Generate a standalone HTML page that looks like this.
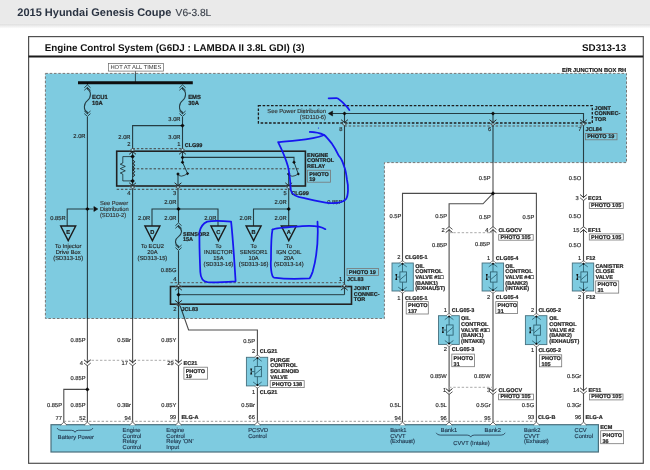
<!DOCTYPE html>
<html><head><meta charset="utf-8"><style>
html,body{margin:0;padding:0;background:#fff;width:650px;height:470px;overflow:hidden;}
svg{position:absolute;left:0;top:0;will-change:transform;}
svg text{font-family:"Liberation Sans",sans-serif;text-rendering:geometricPrecision;}
</style></head><body>
<svg width="650" height="470" viewBox="0 0 650 470">
<defs><linearGradient id="sh" x1="0" y1="0" x2="0" y2="1"><stop offset="0" stop-color="#dcdcdc"/><stop offset="1" stop-color="#ffffff"/></linearGradient></defs>
<rect x="28.6" y="36.6" width="614.6999999999999" height="426.7" fill="#fff" stroke="#505050" stroke-width="1.2" />
<line x1="28.6" y1="56.4" x2="643.2" y2="56.4" stroke="#1a1a1a" stroke-width="2.0" />
<text x="44.7" y="51.0" font-size="9.85" font-weight="bold" text-anchor="start" fill="#111" stroke-width="0">Engine Control System (G6DJ : LAMBDA II 3.8L GDI) (3)</text>
<text x="626.2" y="51.0" font-size="9.8" font-weight="bold" text-anchor="end" fill="#111" stroke-width="0">SD313-13</text>
<text x="626.2" y="71.6" font-size="5.73" font-weight="bold" text-anchor="end" fill="#222" stroke="#222" stroke-width="0.2" >E/R JUNCTION BOX RH</text>
<polygon points="45.4,73.4 626.5,73.4 626.5,162.6 384.4,162.6 384.4,318.5 45.4,318.5" fill="#7ecbe0" stroke="#777" stroke-width="1.0" stroke-dasharray="2.5 1.8"/>
<line x1="135.4" y1="70.6" x2="135.4" y2="82.7" stroke="rgba(0,0,0,0.7)" stroke-width="0.9" />
<rect x="108.4" y="63.4" width="55.099999999999994" height="7.699999999999996" fill="#fff" stroke="#666" stroke-width="0.7" />
<text x="135.9" y="69.3" font-size="5.8" text-anchor="middle" fill="#333" stroke-width="0.05">HOT AT ALL TIMES</text>
<line x1="78" y1="82.7" x2="192.8" y2="82.7" stroke="#0e0e0e" stroke-width="3.0" />
<line x1="87.4" y1="82.7" x2="87.4" y2="84.5" stroke="rgba(0,0,0,0.7)" stroke-width="1.1" />
<polyline points="84.30000000000001,87.7 87.4,84.89999999999999 90.5,87.7" fill="none" stroke="rgba(0,0,0,0.7)" stroke-width="0.95" />
<polyline points="84.30000000000001,90.3 87.4,87.5 90.5,90.3" fill="none" stroke="rgba(0,0,0,0.7)" stroke-width="0.95" />
<path d="M87.4,87.5 L87.4,89.0 C91.9,91.5 90.9,98.15 87.4,100.65 C83.9,103.15 82.9,109.8 87.4,112.3 L87.4,113.8" fill="none" stroke="rgba(0,0,0,0.7)" stroke-width="1.1"/>
<polyline points="84.30000000000001,111.0 87.4,113.8 90.5,111.0" fill="none" stroke="rgba(0,0,0,0.7)" stroke-width="0.95" />
<polyline points="84.30000000000001,113.6 87.4,116.4 90.5,113.6" fill="none" stroke="rgba(0,0,0,0.7)" stroke-width="0.95" />
<polyline points="179.4,87.7 182.5,84.89999999999999 185.6,87.7" fill="none" stroke="rgba(0,0,0,0.7)" stroke-width="0.95" />
<polyline points="179.4,90.3 182.5,87.5 185.6,90.3" fill="none" stroke="rgba(0,0,0,0.7)" stroke-width="0.95" />
<path d="M182.5,87.5 L182.5,89.0 C187.0,91.5 186.0,98.15 182.5,100.65 C179.0,103.15 178.0,109.8 182.5,112.3 L182.5,113.8" fill="none" stroke="rgba(0,0,0,0.7)" stroke-width="1.1"/>
<polyline points="179.4,111.0 182.5,113.8 185.6,111.0" fill="none" stroke="rgba(0,0,0,0.7)" stroke-width="0.95" />
<polyline points="179.4,113.6 182.5,116.4 185.6,113.6" fill="none" stroke="rgba(0,0,0,0.7)" stroke-width="0.95" />
<text x="92" y="99.0" font-size="5.9" font-weight="bold" text-anchor="start" fill="#1e1e1e" stroke="#1e1e1e" stroke-width="0.2" >ECU1</text>
<text x="92" y="104.9" font-size="5.9" font-weight="bold" text-anchor="start" fill="#1e1e1e" stroke="#1e1e1e" stroke-width="0.2" >10A</text>
<text x="188.2" y="99.0" font-size="5.9" font-weight="bold" text-anchor="start" fill="#1e1e1e" stroke="#1e1e1e" stroke-width="0.2" >EMS</text>
<text x="188.2" y="104.9" font-size="5.9" font-weight="bold" text-anchor="start" fill="#1e1e1e" stroke="#1e1e1e" stroke-width="0.2" >30A</text>
<line x1="87.4" y1="117" x2="87.4" y2="424.7" stroke="rgba(0,0,0,0.7)" stroke-width="1.1" />
<text x="85.5" y="138.3" font-size="5.75" text-anchor="end" fill="#262626" stroke="#262626" stroke-width="0.15" >2.0R</text>
<line x1="182.5" y1="117" x2="182.5" y2="151.2" stroke="rgba(0,0,0,0.7)" stroke-width="1.1" />
<text x="180.5" y="121" font-size="5.75" text-anchor="end" fill="#262626" stroke="#262626" stroke-width="0.15" >3.0R</text>
<polygon points="182.5,123.5 184.6,125.6 182.5,127.69999999999999 180.4,125.6" fill="#111"/>
<polyline points="182.5,125.6 132.6,125.6 132.6,151.2" fill="none" stroke="rgba(0,0,0,0.7)" stroke-width="1.1" />
<text x="130.5" y="138.5" font-size="5.75" text-anchor="end" fill="#262626" stroke="#262626" stroke-width="0.15" >2.0R</text>
<text x="180.5" y="138.5" font-size="5.75" text-anchor="end" fill="#262626" stroke="#262626" stroke-width="0.15" >3.0R</text>
<text x="130.5" y="146.2" font-size="5.75" text-anchor="end" fill="#262626" stroke="#262626" stroke-width="0.15" >2</text>
<text x="180.5" y="146.2" font-size="5.75" text-anchor="end" fill="#262626" stroke="#262626" stroke-width="0.15" >1</text>
<text x="184.7" y="146.7" font-size="5.5" font-weight="bold" text-anchor="start" fill="#1e1e1e" stroke="#1e1e1e" stroke-width="0.2" >CLG99</text>
<line x1="132.6" y1="148.7" x2="182.5" y2="148.7" stroke="#444" stroke-width="1.0" stroke-dasharray="2.4 1.8"/>
<rect x="116.7" y="151.2" width="188.7" height="34.80000000000001" fill="none" stroke="#222" stroke-width="1.6" />
<line x1="132.6" y1="149.0" x2="132.6" y2="150.8" stroke="#a9dcea" stroke-width="1.5" />
<polyline points="129.2,151.10000000000002 132.6,148.3 136.0,151.10000000000002" fill="none" stroke="#5a5a5a" stroke-width="1.0" />
<polyline points="129.2,154.3 132.6,151.5 136.0,154.3" fill="none" stroke="#2a2a2a" stroke-width="1.0" />
<line x1="182.5" y1="149.0" x2="182.5" y2="150.8" stroke="#a9dcea" stroke-width="1.5" />
<polyline points="179.1,151.10000000000002 182.5,148.3 185.9,151.10000000000002" fill="none" stroke="#5a5a5a" stroke-width="1.0" />
<polyline points="179.1,154.3 182.5,151.5 185.9,154.3" fill="none" stroke="#2a2a2a" stroke-width="1.0" />
<polyline points="182.5,157.4 294,157.4 294,162.2" fill="none" stroke="rgba(0,0,0,0.7)" stroke-width="1.1" />
<line x1="132.6" y1="168.8" x2="300" y2="168.8" stroke="#444" stroke-width="1.0" stroke-dasharray="2.4 1.8"/>
<line x1="182.5" y1="151.2" x2="182.5" y2="162" stroke="rgba(0,0,0,0.7)" stroke-width="1.1" />
<polygon points="182.5,155.58 184.32,157.4 182.5,159.22 180.68,157.4" fill="#111"/>
<polygon points="182.5,160.38 184.32,162.2 182.5,164.01999999999998 180.68,162.2" fill="#111"/>
<line x1="182.5" y1="162.2" x2="187.6" y2="173.6" stroke="rgba(0,0,0,0.7)" stroke-width="1.0" />
<polygon points="187.6,172.06 189.14,173.6 187.6,175.14 186.06,173.6" fill="#111"/>
<polygon points="178,172.18 179.82,174 178,175.82 176.18,174" fill="#111"/>
<path d="M178,174 Q180,178.5 187.6,173.6" fill="none" stroke="#222" stroke-width="0.8"/>
<line x1="178" y1="174" x2="178" y2="209" stroke="rgba(0,0,0,0.7)" stroke-width="1.1" />
<polygon points="294,160.38 295.82,162.2 294,164.01999999999998 292.18,162.2" fill="#111"/>
<line x1="294" y1="162.2" x2="298.3" y2="174" stroke="rgba(0,0,0,0.7)" stroke-width="1.0" />
<polygon points="298.3,172.46 299.84000000000003,174 298.3,175.54 296.76,174" fill="#111"/>
<polygon points="288.7,172.18 290.52,174 288.7,175.82 286.88,174" fill="#111"/>
<path d="M288.7,174 Q291,178.5 298.3,174" fill="none" stroke="#222" stroke-width="0.8"/>
<line x1="288.7" y1="174" x2="288.7" y2="209" stroke="rgba(0,0,0,0.7)" stroke-width="1.1" />
<line x1="132.6" y1="151.2" x2="132.6" y2="424.7" stroke="rgba(0,0,0,0.7)" stroke-width="1.1" />
<polygon points="132.6,154.35999999999999 134.84,156.6 132.6,158.84 130.35999999999999,156.6" fill="#111"/>
<polygon points="132.6,178.66 134.84,180.9 132.6,183.14000000000001 130.35999999999999,180.9" fill="#111"/>
<path d="M132.6,160.2 q4.2,1.65 0,3.3 q4.2,1.65 0,3.3 q4.2,1.65 0,3.3 q4.2,1.65 0,3.3 q4.2,1.65 0,3.3" fill="none" stroke="#222" stroke-width="1.0"/>
<polyline points="132.6,156.6 122.8,156.6 122.8,163 120.3,164.2 125.3,166.4 120.3,168.6 125.3,170.8 120.3,173 122.8,174.2 122.8,180.9 132.6,180.9" fill="none" stroke="rgba(0,0,0,0.7)" stroke-width="0.9" />
<line x1="116.7" y1="189.3" x2="290" y2="189.3" stroke="#444" stroke-width="1.0" stroke-dasharray="2.4 1.8"/>
<line x1="132.6" y1="186.29999999999998" x2="132.6" y2="188.1" stroke="#a9dcea" stroke-width="1.5" />
<polyline points="129.2,182.79999999999998 132.6,185.6 136.0,182.79999999999998" fill="none" stroke="#2a2a2a" stroke-width="1.0" />
<polyline points="129.2,185.99999999999997 132.6,188.79999999999998 136.0,185.99999999999997" fill="none" stroke="#5a5a5a" stroke-width="1.0" />
<line x1="178" y1="186.29999999999998" x2="178" y2="188.1" stroke="#a9dcea" stroke-width="1.5" />
<polyline points="174.6,182.79999999999998 178,185.6 181.4,182.79999999999998" fill="none" stroke="#2a2a2a" stroke-width="1.0" />
<polyline points="174.6,185.99999999999997 178,188.79999999999998 181.4,185.99999999999997" fill="none" stroke="#5a5a5a" stroke-width="1.0" />
<line x1="288.7" y1="186.29999999999998" x2="288.7" y2="188.1" stroke="#a9dcea" stroke-width="1.5" />
<polyline points="285.3,182.79999999999998 288.7,185.6 292.09999999999997,182.79999999999998" fill="none" stroke="#2a2a2a" stroke-width="1.0" />
<polyline points="285.3,185.99999999999997 288.7,188.79999999999998 292.09999999999997,185.99999999999997" fill="none" stroke="#5a5a5a" stroke-width="1.0" />
<text x="130.5" y="194.7" font-size="5.75" text-anchor="end" fill="#262626" stroke="#262626" stroke-width="0.15" >4</text>
<text x="176.3" y="194.7" font-size="5.75" text-anchor="end" fill="#262626" stroke="#262626" stroke-width="0.15" >3</text>
<text x="286.7" y="194.7" font-size="5.75" text-anchor="end" fill="#262626" stroke="#262626" stroke-width="0.15" >5</text>
<text x="291.2" y="194.7" font-size="5.5" font-weight="bold" text-anchor="start" fill="#1e1e1e" stroke="#1e1e1e" stroke-width="0.2" >CLG99</text>
<text x="307" y="156.6" font-size="5.5" font-weight="bold" text-anchor="start" fill="#1e1e1e" stroke="#1e1e1e" stroke-width="0.2" >ENGINE</text>
<text x="307" y="162.2" font-size="5.5" font-weight="bold" text-anchor="start" fill="#1e1e1e" stroke="#1e1e1e" stroke-width="0.2" >CONTROL</text>
<text x="307" y="167.8" font-size="5.5" font-weight="bold" text-anchor="start" fill="#1e1e1e" stroke="#1e1e1e" stroke-width="0.2" >RELAY</text>
<rect x="307.5" y="170.2" width="23.0" height="12.0" fill="rgba(255,255,255,0.0)" stroke="#777" stroke-width="0.8" />
<text x="309.3" y="175.8" font-size="5.5" font-weight="bold" text-anchor="start" fill="#1e1e1e" stroke="#1e1e1e" stroke-width="0.2" >PHOTO</text>
<text x="309.3" y="181.3" font-size="5.5" font-weight="bold" text-anchor="start" fill="#1e1e1e" stroke="#1e1e1e" stroke-width="0.2" >19</text>
<rect x="258.4" y="105.6" width="333.9" height="17.400000000000006" fill="none" stroke="#1e1e1e" stroke-width="1.3" stroke-dasharray="2.6 1.6"/>
<line x1="344.5" y1="126.0" x2="583.5" y2="126.0" stroke="#555" stroke-width="1.0" stroke-dasharray="2.4 1.8"/>
<text x="326" y="112.8" font-size="5.77" text-anchor="end" fill="#333" stroke="#333" stroke-width="0.15" >See Power Distribution</text>
<text x="326" y="118.5" font-size="5.77" text-anchor="end" fill="#333" stroke="#333" stroke-width="0.15" >(SD110-6)</text>
<polygon points="328.3,113.5 332.6,111.0 332.6,116.0" fill="#111" stroke="#111" stroke-width="0.5" />
<polyline points="332.4,113.5 583.5,113.5 583.5,424.7" fill="none" stroke="rgba(0,0,0,0.7)" stroke-width="1.1" />
<polygon points="344.5,111.4 346.6,113.5 344.5,115.6 342.4,113.5" fill="#111"/>
<polygon points="493,111.4 495.1,113.5 493,115.6 490.9,113.5" fill="#111"/>
<line x1="344.5" y1="113.5" x2="344.5" y2="294.7" stroke="rgba(0,0,0,0.7)" stroke-width="1.1" />
<line x1="493" y1="113.5" x2="493" y2="424.7" stroke="rgba(0,0,0,0.7)" stroke-width="1.1" />
<line x1="344.5" y1="123.2" x2="344.5" y2="125.0" stroke="#a9dcea" stroke-width="1.5" />
<polyline points="341.1,119.7 344.5,122.5 347.9,119.7" fill="none" stroke="#2a2a2a" stroke-width="1.0" />
<polyline points="341.1,122.9 344.5,125.7 347.9,122.9" fill="none" stroke="#5a5a5a" stroke-width="1.0" />
<line x1="493" y1="123.2" x2="493" y2="125.0" stroke="#a9dcea" stroke-width="1.5" />
<polyline points="489.6,119.7 493,122.5 496.4,119.7" fill="none" stroke="#2a2a2a" stroke-width="1.0" />
<polyline points="489.6,122.9 493,125.7 496.4,122.9" fill="none" stroke="#5a5a5a" stroke-width="1.0" />
<line x1="583.5" y1="123.2" x2="583.5" y2="125.0" stroke="#a9dcea" stroke-width="1.5" />
<polyline points="580.1,119.7 583.5,122.5 586.9,119.7" fill="none" stroke="#2a2a2a" stroke-width="1.0" />
<polyline points="580.1,122.9 583.5,125.7 586.9,122.9" fill="none" stroke="#5a5a5a" stroke-width="1.0" />
<text x="342.5" y="130.8" font-size="5.75" text-anchor="end" fill="#262626" stroke="#262626" stroke-width="0.15" >8</text>
<text x="491.3" y="130.8" font-size="5.75" text-anchor="end" fill="#262626" stroke="#262626" stroke-width="0.15" >6</text>
<text x="581.5" y="130.8" font-size="5.75" text-anchor="end" fill="#262626" stroke="#262626" stroke-width="0.15" >7</text>
<text x="594.6" y="109.6" font-size="5.5" font-weight="bold" text-anchor="start" fill="#1e1e1e" stroke="#1e1e1e" stroke-width="0.2" >JOINT</text>
<text x="594.6" y="115.2" font-size="5.5" font-weight="bold" text-anchor="start" fill="#1e1e1e" stroke="#1e1e1e" stroke-width="0.2" >CONNEC-</text>
<text x="594.6" y="120.8" font-size="5.5" font-weight="bold" text-anchor="start" fill="#1e1e1e" stroke="#1e1e1e" stroke-width="0.2" >TOR</text>
<text x="585.4" y="130.8" font-size="5.5" font-weight="bold" text-anchor="start" fill="#1e1e1e" stroke="#1e1e1e" stroke-width="0.2" >JCL84</text>
<rect x="585.4" y="133.5" width="31.600000000000023" height="6.300000000000011" fill="rgba(255,255,255,0.0)" stroke="#777" stroke-width="0.8" />
<text x="587.1999999999999" y="138.3" font-size="5.5" font-weight="bold" text-anchor="start" fill="#1e1e1e" stroke="#1e1e1e" stroke-width="0.2" >PHOTO 19</text>
<text x="342.3" y="204.3" font-size="5.75" text-anchor="end" fill="#262626" stroke="#262626" stroke-width="0.15" >0.85P</text>
<polygon points="87.4,206.9 89.5,209 87.4,211.1 85.30000000000001,209" fill="#111"/>
<polyline points="67.2,226 67.2,209 93,209" fill="none" stroke="rgba(0,0,0,0.7)" stroke-width="1.1" />
<polygon points="93.9,206.6 97.8,209 93.9,211.4" fill="#111" stroke="#111" stroke-width="0.6" />
<text x="65.6" y="220.3" font-size="5.75" text-anchor="end" fill="#262626" stroke="#262626" stroke-width="0.15" >0.85R</text>
<polygon points="60.7,226 75.7,226 68.2,240.6" fill="none" stroke="#1c1c1c" stroke-width="1.4" />
<text x="68.2" y="234.3" font-size="5.7" font-weight="bold" text-anchor="middle" fill="#1e1e1e" stroke="#1e1e1e" stroke-width="0.2" >E</text>
<text x="68.2" y="247.8" font-size="5.75" text-anchor="middle" fill="#262626" stroke="#262626" stroke-width="0.15" >To Injector</text>
<text x="68.2" y="253.8" font-size="5.75" text-anchor="middle" fill="#262626" stroke="#262626" stroke-width="0.15" >Drive Box</text>
<text x="68.2" y="259.7" font-size="5.75" text-anchor="middle" fill="#262626" stroke="#262626" stroke-width="0.15" >(SD313-15)</text>
<text x="99.9" y="205" font-size="5.77" text-anchor="start" fill="#333" stroke="#333" stroke-width="0.15" >See Power</text>
<text x="99.9" y="210.8" font-size="5.77" text-anchor="start" fill="#333" stroke="#333" stroke-width="0.15" >Distribution</text>
<text x="99.9" y="216.8" font-size="5.77" text-anchor="start" fill="#333" stroke="#333" stroke-width="0.15" >(SD110-2)</text>
<text x="176.3" y="203.7" font-size="5.75" text-anchor="end" fill="#262626" stroke="#262626" stroke-width="0.15" >2.0R</text>
<polygon points="178.5,206.9 180.6,209 178.5,211.1 176.4,209" fill="#111"/>
<polyline points="152,226 152,209 218,209 218,226" fill="none" stroke="rgba(0,0,0,0.7)" stroke-width="1.1" />
<line x1="178.5" y1="209" x2="178.5" y2="222.5" stroke="rgba(0,0,0,0.7)" stroke-width="1.1" />
<line x1="178.5" y1="251" x2="178.5" y2="286.5" stroke="rgba(0,0,0,0.7)" stroke-width="1.1" />
<text x="150.2" y="219.6" font-size="5.75" text-anchor="end" fill="#262626" stroke="#262626" stroke-width="0.15" >2.0R</text>
<text x="176.5" y="219.6" font-size="5.75" text-anchor="end" fill="#262626" stroke="#262626" stroke-width="0.15" >2.0R</text>
<text x="216.3" y="219.6" font-size="5.75" text-anchor="end" fill="#262626" stroke="#262626" stroke-width="0.15" >2.0R</text>
<polygon points="144.9,226 159.9,226 152.4,240.6" fill="none" stroke="#1c1c1c" stroke-width="1.4" />
<text x="152.4" y="234.3" font-size="5.7" font-weight="bold" text-anchor="middle" fill="#1e1e1e" stroke="#1e1e1e" stroke-width="0.2" >D</text>
<text x="152.4" y="247.8" font-size="5.75" text-anchor="middle" fill="#262626" stroke="#262626" stroke-width="0.15" >To ECU2</text>
<text x="152.4" y="253.8" font-size="5.75" text-anchor="middle" fill="#262626" stroke="#262626" stroke-width="0.15" >20A</text>
<text x="152.4" y="259.7" font-size="5.75" text-anchor="middle" fill="#262626" stroke="#262626" stroke-width="0.15" >(SD313-15)</text>
<polygon points="210.9,226 225.9,226 218.4,240.6" fill="none" stroke="#1c1c1c" stroke-width="1.4" />
<text x="218.4" y="234.3" font-size="5.7" font-weight="bold" text-anchor="middle" fill="#1e1e1e" stroke="#1e1e1e" stroke-width="0.2" >C</text>
<text x="218.4" y="248" font-size="5.75" text-anchor="middle" fill="#262626" stroke="#262626" stroke-width="0.15" >To</text>
<text x="218.4" y="254" font-size="5.75" text-anchor="middle" fill="#262626" stroke="#262626" stroke-width="0.15" >INJECTOR</text>
<text x="218.4" y="259.9" font-size="5.75" text-anchor="middle" fill="#262626" stroke="#262626" stroke-width="0.15" >15A</text>
<text x="218.4" y="265.8" font-size="5.75" text-anchor="middle" fill="#262626" stroke="#262626" stroke-width="0.15" >(SD313-16)</text>
<polyline points="175.4,225.70000000000002 178.5,222.9 181.6,225.70000000000002" fill="none" stroke="rgba(0,0,0,0.7)" stroke-width="0.95" />
<polyline points="175.4,228.3 178.5,225.5 181.6,228.3" fill="none" stroke="rgba(0,0,0,0.7)" stroke-width="0.95" />
<path d="M178.5,225.5 L178.5,227.0 C183.0,229.5 182.0,234.15 178.5,236.65 C175.0,239.15 174.0,243.8 178.5,246.3 L178.5,247.8" fill="none" stroke="rgba(0,0,0,0.7)" stroke-width="1.1"/>
<polyline points="175.4,245.0 178.5,247.8 181.6,245.0" fill="none" stroke="rgba(0,0,0,0.7)" stroke-width="0.95" />
<polyline points="175.4,247.6 178.5,250.4 181.6,247.6" fill="none" stroke="rgba(0,0,0,0.7)" stroke-width="0.95" />
<text x="183" y="235.6" font-size="5.5" font-weight="bold" text-anchor="start" fill="#1e1e1e" stroke="#1e1e1e" stroke-width="0.2" >SENSOR2</text>
<text x="183" y="240.9" font-size="5.5" font-weight="bold" text-anchor="start" fill="#1e1e1e" stroke="#1e1e1e" stroke-width="0.2" >15A</text>
<text x="176.5" y="272.2" font-size="5.75" text-anchor="end" fill="#262626" stroke="#262626" stroke-width="0.15" >0.85G</text>
<text x="176.5" y="280.8" font-size="5.75" text-anchor="end" fill="#262626" stroke="#262626" stroke-width="0.15" >4</text>
<text x="286.7" y="203.7" font-size="5.75" text-anchor="end" fill="#262626" stroke="#262626" stroke-width="0.15" >2.0R</text>
<polygon points="288.7,206.9 290.8,209 288.7,211.1 286.59999999999997,209" fill="#111"/>
<polyline points="253.5,226 253.5,209 288.7,209 288.7,226" fill="none" stroke="rgba(0,0,0,0.7)" stroke-width="1.1" />
<text x="251.7" y="219.6" font-size="5.75" text-anchor="end" fill="#262626" stroke="#262626" stroke-width="0.15" >2.0R</text>
<text x="286.7" y="219.6" font-size="5.75" text-anchor="end" fill="#262626" stroke="#262626" stroke-width="0.15" >2.0R</text>
<polygon points="246.1,226 261.1,226 253.6,240.6" fill="none" stroke="#1c1c1c" stroke-width="1.4" />
<text x="253.6" y="234.3" font-size="5.7" font-weight="bold" text-anchor="middle" fill="#1e1e1e" stroke="#1e1e1e" stroke-width="0.2" >B</text>
<text x="253.6" y="248" font-size="5.75" text-anchor="middle" fill="#262626" stroke="#262626" stroke-width="0.15" >To</text>
<text x="253.6" y="254" font-size="5.75" text-anchor="middle" fill="#262626" stroke="#262626" stroke-width="0.15" >SENSOR1</text>
<text x="253.6" y="259.9" font-size="5.75" text-anchor="middle" fill="#262626" stroke="#262626" stroke-width="0.15" >10A</text>
<text x="253.6" y="265.8" font-size="5.75" text-anchor="middle" fill="#262626" stroke="#262626" stroke-width="0.15" >(SD313-16)</text>
<polygon points="281.3,226 296.3,226 288.8,240.6" fill="none" stroke="#1c1c1c" stroke-width="1.4" />
<text x="288.8" y="234.3" font-size="5.7" font-weight="bold" text-anchor="middle" fill="#1e1e1e" stroke="#1e1e1e" stroke-width="0.2" >A</text>
<text x="288.8" y="248" font-size="5.75" text-anchor="middle" fill="#262626" stroke="#262626" stroke-width="0.15" >To</text>
<text x="288.8" y="254" font-size="5.75" text-anchor="middle" fill="#262626" stroke="#262626" stroke-width="0.15" >IGN COIL</text>
<text x="288.8" y="259.9" font-size="5.75" text-anchor="middle" fill="#262626" stroke="#262626" stroke-width="0.15" >20A</text>
<text x="288.8" y="265.8" font-size="5.75" text-anchor="middle" fill="#262626" stroke="#262626" stroke-width="0.15" >(SD313-14)</text>
<line x1="170.5" y1="282.7" x2="344.3" y2="282.7" stroke="#555" stroke-width="1.0" stroke-dasharray="2.4 1.8"/>
<rect x="170.5" y="286.5" width="181.0" height="17.69999999999999" fill="none" stroke="#222" stroke-width="1.6" />
<polyline points="178.5,294.7 344.3,294.7" fill="none" stroke="rgba(0,0,0,0.7)" stroke-width="1.0" />
<line x1="178.5" y1="284.9" x2="178.5" y2="286.7" stroke="#a9dcea" stroke-width="1.5" />
<polyline points="175.1,287.0 178.5,284.2 181.9,287.0" fill="none" stroke="#5a5a5a" stroke-width="1.0" />
<polyline points="175.1,290.2 178.5,287.4 181.9,290.2" fill="none" stroke="#2a2a2a" stroke-width="1.0" />
<line x1="344.3" y1="284.9" x2="344.3" y2="286.7" stroke="#a9dcea" stroke-width="1.5" />
<polyline points="340.90000000000003,287.0 344.3,284.2 347.7,287.0" fill="none" stroke="#5a5a5a" stroke-width="1.0" />
<polyline points="340.90000000000003,290.2 344.3,287.4 347.7,290.2" fill="none" stroke="#2a2a2a" stroke-width="1.0" />
<line x1="178.5" y1="303.9" x2="178.5" y2="305.7" stroke="#a9dcea" stroke-width="1.5" />
<polyline points="175.1,300.4 178.5,303.2 181.9,300.4" fill="none" stroke="#2a2a2a" stroke-width="1.0" />
<polyline points="175.1,303.59999999999997 178.5,306.4 181.9,303.59999999999997" fill="none" stroke="#5a5a5a" stroke-width="1.0" />
<polygon points="178.5,292.59999999999997 180.6,294.7 178.5,296.8 176.4,294.7" fill="#111"/>
<text x="342.3" y="280.8" font-size="5.75" text-anchor="end" fill="#262626" stroke="#262626" stroke-width="0.15" >1</text>
<text x="347" y="281.0" font-size="5.5" font-weight="bold" text-anchor="start" fill="#1e1e1e" stroke="#1e1e1e" stroke-width="0.2" >JCL83</text>
<rect x="347" y="268.5" width="31.5" height="6.899999999999977" fill="rgba(255,255,255,0.0)" stroke="#777" stroke-width="0.8" />
<text x="348.8" y="273.9" font-size="5.5" font-weight="bold" text-anchor="start" fill="#1e1e1e" stroke="#1e1e1e" stroke-width="0.2" >PHOTO 19</text>
<text x="353.8" y="290.2" font-size="5.5" font-weight="bold" text-anchor="start" fill="#1e1e1e" stroke="#1e1e1e" stroke-width="0.2" >JOINT</text>
<text x="353.8" y="295.8" font-size="5.5" font-weight="bold" text-anchor="start" fill="#1e1e1e" stroke="#1e1e1e" stroke-width="0.2" >CONNEC-</text>
<text x="353.8" y="301.4" font-size="5.5" font-weight="bold" text-anchor="start" fill="#1e1e1e" stroke="#1e1e1e" stroke-width="0.2" >TOR</text>
<text x="176.5" y="311.2" font-size="5.75" text-anchor="end" fill="#262626" stroke="#262626" stroke-width="0.15" >2</text>
<text x="181.5" y="311.2" font-size="5.5" font-weight="bold" text-anchor="start" fill="#1e1e1e" stroke="#1e1e1e" stroke-width="0.2" >JCL83</text>
<line x1="178.5" y1="286.5" x2="178.5" y2="424.7" stroke="rgba(0,0,0,0.7)" stroke-width="1.1" />
<polyline points="180.2,306 188.6,330 257.4,330 257.4,424.7" fill="none" stroke="rgba(0,0,0,0.7)" stroke-width="1.1" />
<text x="85.6" y="342" font-size="5.75" text-anchor="end" fill="#262626" stroke="#262626" stroke-width="0.15" >0.85P</text>
<text x="131" y="342" font-size="5.75" text-anchor="end" fill="#262626" stroke="#262626" stroke-width="0.15" >0.5Br</text>
<text x="176.3" y="342.4" font-size="5.75" text-anchor="end" fill="#262626" stroke="#262626" stroke-width="0.15" >0.85Y</text>
<line x1="87.4" y1="360.3" x2="178.5" y2="360.3" stroke="#aaa" stroke-width="1.0" stroke-dasharray="2.4 1.8"/>
<line x1="87.4" y1="363.3" x2="87.4" y2="365.1" stroke="#ffffff" stroke-width="1.5" />
<polyline points="84.0,359.8 87.4,362.6 90.80000000000001,359.8" fill="none" stroke="#2a2a2a" stroke-width="1.0" />
<polyline points="84.0,363.0 87.4,365.8 90.80000000000001,363.0" fill="none" stroke="#5a5a5a" stroke-width="1.0" />
<line x1="132.6" y1="363.3" x2="132.6" y2="365.1" stroke="#ffffff" stroke-width="1.5" />
<polyline points="129.2,359.8 132.6,362.6 136.0,359.8" fill="none" stroke="#2a2a2a" stroke-width="1.0" />
<polyline points="129.2,363.0 132.6,365.8 136.0,363.0" fill="none" stroke="#5a5a5a" stroke-width="1.0" />
<line x1="178.5" y1="363.3" x2="178.5" y2="365.1" stroke="#ffffff" stroke-width="1.5" />
<polyline points="175.1,359.8 178.5,362.6 181.9,359.8" fill="none" stroke="#2a2a2a" stroke-width="1.0" />
<polyline points="175.1,363.0 178.5,365.8 181.9,363.0" fill="none" stroke="#5a5a5a" stroke-width="1.0" />
<text x="82.9" y="364.8" font-size="5.75" text-anchor="end" fill="#262626" stroke="#262626" stroke-width="0.15" >4</text>
<text x="127.9" y="364.8" font-size="5.75" text-anchor="end" fill="#262626" stroke="#262626" stroke-width="0.15" >17</text>
<text x="173.7" y="364.8" font-size="5.75" text-anchor="end" fill="#262626" stroke="#262626" stroke-width="0.15" >29</text>
<text x="183.6" y="365.3" font-size="5.5" font-weight="bold" text-anchor="start" fill="#1e1e1e" stroke="#1e1e1e" stroke-width="0.2" >EC21</text>
<rect x="183.9" y="367.2" width="23.69999999999999" height="12.0" fill="rgba(255,255,255,0.0)" stroke="#777" stroke-width="0.8" />
<text x="185.70000000000002" y="372.6" font-size="5.5" font-weight="bold" text-anchor="start" fill="#1e1e1e" stroke="#1e1e1e" stroke-width="0.2" >PHOTO</text>
<text x="185.70000000000002" y="378.2" font-size="5.5" font-weight="bold" text-anchor="start" fill="#1e1e1e" stroke="#1e1e1e" stroke-width="0.2" >19</text>
<text x="85.6" y="379.5" font-size="5.75" text-anchor="end" fill="#262626" stroke="#262626" stroke-width="0.15" >0.85P</text>
<polygon points="87.4,387.29999999999995 89.5,389.4 87.4,391.5 85.30000000000001,389.4" fill="#111"/>
<polyline points="87.4,389.4 63.8,389.4 63.8,424.7" fill="none" stroke="rgba(0,0,0,0.7)" stroke-width="1.1" />
<text x="62" y="406.9" font-size="5.75" text-anchor="end" fill="#262626" stroke="#262626" stroke-width="0.15" >0.85P</text>
<text x="85.6" y="406.9" font-size="5.75" text-anchor="end" fill="#262626" stroke="#262626" stroke-width="0.15" >0.85P</text>
<text x="131" y="406.9" font-size="5.75" text-anchor="end" fill="#262626" stroke="#262626" stroke-width="0.15" >0.3Br</text>
<text x="176.3" y="406.8" font-size="5.75" text-anchor="end" fill="#262626" stroke="#262626" stroke-width="0.15" >0.85Y</text>
<text x="62" y="419.6" font-size="5.75" text-anchor="end" fill="#262626" stroke="#262626" stroke-width="0.15" >77</text>
<text x="85.6" y="419.6" font-size="5.75" text-anchor="end" fill="#262626" stroke="#262626" stroke-width="0.15" >52</text>
<text x="131" y="419.6" font-size="5.75" text-anchor="end" fill="#262626" stroke="#262626" stroke-width="0.15" >94</text>
<text x="176.3" y="419.4" font-size="5.75" text-anchor="end" fill="#262626" stroke="#262626" stroke-width="0.15" >99</text>
<text x="181.4" y="419.2" font-size="5.5" font-weight="bold" text-anchor="start" fill="#1e1e1e" stroke="#1e1e1e" stroke-width="0.2" >ELG-A</text>
<text x="255" y="342.6" font-size="5.75" text-anchor="end" fill="#262626" stroke="#262626" stroke-width="0.15" >0.5P</text>
<text x="255.3" y="353.4" font-size="5.75" text-anchor="end" fill="#262626" stroke="#262626" stroke-width="0.15" >2</text>
<text x="259.7" y="353.4" font-size="5.5" font-weight="bold" text-anchor="start" fill="#1e1e1e" stroke="#1e1e1e" stroke-width="0.2" >CLG21</text>
<rect x="246.4" y="357.3" width="21.299999999999983" height="28.599999999999966" fill="#7ecbe0" stroke="#46707e" stroke-width="0.9" />
<line x1="257.4" y1="358.3" x2="257.4" y2="366.5" stroke="#2f6475" stroke-width="0.9" />
<line x1="257.4" y1="376.70000000000005" x2="257.4" y2="384.9" stroke="#2f6475" stroke-width="0.9" />
<polyline points="253.09999999999997,361.2 257.4,358.0 261.7,361.2" fill="none" stroke="#2f6475" stroke-width="0.9" />
<polyline points="253.09999999999997,382.0 257.4,385.2 261.7,382.0" fill="none" stroke="#2f6475" stroke-width="0.9" />
<rect x="254.79999999999998" y="366.5" width="6.599999999999994" height="10.200000000000045" fill="none" stroke="#2f6475" stroke-width="0.9" />
<line x1="254.79999999999998" y1="374.40000000000003" x2="261.4" y2="368.8" stroke="#2f6475" stroke-width="0.9" />
<line x1="251.99999999999997" y1="371.6" x2="254.79999999999998" y2="371.6" stroke="#2f6475" stroke-width="0.9" />
<path d="M250.2,368.6 L252.2,368.6 L251.49999999999997,371.6 L252.2,374.6 L250.2,374.6 L250.89999999999998,371.6 Z" fill="#111"/>
<path d="M254.39999999999998,357.5 Q257.4,353.1 260.4,357.5" fill="#fff" stroke="#555" stroke-width="0.7"/>
<path d="M254.39999999999998,385.7 Q257.4,390.09999999999997 260.4,385.7" fill="#fff" stroke="#555" stroke-width="0.7"/>
<polygon points="257.4,356.84000000000003 258.65999999999997,358.1 257.4,359.36 256.14,358.1" fill="#111"/>
<polygon points="257.4,383.84 258.65999999999997,385.09999999999997 257.4,386.35999999999996 256.14,385.09999999999997" fill="#111"/>
<text x="270.2" y="361.7" font-size="5.5" font-weight="bold" text-anchor="start" fill="#1e1e1e" stroke="#1e1e1e" stroke-width="0.2" >PURGE</text>
<text x="270.2" y="367.4" font-size="5.5" font-weight="bold" text-anchor="start" fill="#1e1e1e" stroke="#1e1e1e" stroke-width="0.2" >CONTROL</text>
<text x="270.2" y="373.1" font-size="5.5" font-weight="bold" text-anchor="start" fill="#1e1e1e" stroke="#1e1e1e" stroke-width="0.2" >SOLENOID</text>
<text x="270.2" y="378.8" font-size="5.5" font-weight="bold" text-anchor="start" fill="#1e1e1e" stroke="#1e1e1e" stroke-width="0.2" >VALVE</text>
<rect x="270.2" y="380.6" width="34.0" height="7.0" fill="rgba(255,255,255,0.0)" stroke="#777" stroke-width="0.8" />
<text x="272.0" y="386.1" font-size="5.5" font-weight="bold" text-anchor="start" fill="#1e1e1e" stroke="#1e1e1e" stroke-width="0.2" >PHOTO 138</text>
<text x="255.3" y="394.2" font-size="5.75" text-anchor="end" fill="#262626" stroke="#262626" stroke-width="0.15" >1</text>
<text x="259.7" y="394.2" font-size="5.5" font-weight="bold" text-anchor="start" fill="#1e1e1e" stroke="#1e1e1e" stroke-width="0.2" >CLG21</text>
<text x="255" y="406.7" font-size="5.75" text-anchor="end" fill="#262626" stroke="#262626" stroke-width="0.15" >0.5Br</text>
<text x="255" y="419.4" font-size="5.75" text-anchor="end" fill="#262626" stroke="#262626" stroke-width="0.15" >66</text>
<polyline points="402.5,424.7 402.5,193.4 536.4,193.4 536.4,424.7" fill="none" stroke="rgba(0,0,0,0.7)" stroke-width="1.1" />
<polygon points="493,191.3 495.1,193.4 493,195.5 490.9,193.4" fill="#111"/>
<polyline points="449.1,424.7 449.1,203.8 483,203.8 493,193.4" fill="none" stroke="rgba(0,0,0,0.7)" stroke-width="1.1" />
<text x="401.3" y="217.8" font-size="5.75" text-anchor="end" fill="#262626" stroke="#262626" stroke-width="0.15" >0.5P</text>
<text x="447" y="217.8" font-size="5.75" text-anchor="end" fill="#262626" stroke="#262626" stroke-width="0.15" >0.5P</text>
<text x="490.8" y="218.9" font-size="5.75" text-anchor="end" fill="#262626" stroke="#262626" stroke-width="0.15" >0.5P</text>
<text x="534.3" y="218.9" font-size="5.75" text-anchor="end" fill="#262626" stroke="#262626" stroke-width="0.15" >0.5P</text>
<text x="490.5" y="180" font-size="5.75" text-anchor="end" fill="#262626" stroke="#262626" stroke-width="0.15" >0.5P</text>
<line x1="449.1" y1="232.7" x2="493" y2="232.7" stroke="#aaa" stroke-width="1.0" stroke-dasharray="2.4 1.8"/>
<line x1="449.1" y1="227.29999999999998" x2="449.1" y2="229.1" stroke="#ffffff" stroke-width="1.5" />
<polyline points="445.70000000000005,229.4 449.1,226.6 452.5,229.4" fill="none" stroke="#5a5a5a" stroke-width="1.0" />
<polyline points="445.70000000000005,232.6 449.1,229.79999999999998 452.5,232.6" fill="none" stroke="#2a2a2a" stroke-width="1.0" />
<line x1="493" y1="227.29999999999998" x2="493" y2="229.1" stroke="#ffffff" stroke-width="1.5" />
<polyline points="489.6,229.4 493,226.6 496.4,229.4" fill="none" stroke="#5a5a5a" stroke-width="1.0" />
<polyline points="489.6,232.6 493,229.79999999999998 496.4,232.6" fill="none" stroke="#2a2a2a" stroke-width="1.0" />
<text x="444.6" y="231.6" font-size="5.75" text-anchor="end" fill="#262626" stroke="#262626" stroke-width="0.15" >2</text>
<text x="488.5" y="231.6" font-size="5.75" text-anchor="end" fill="#262626" stroke="#262626" stroke-width="0.15" >4</text>
<text x="498.4" y="232.0" font-size="5.5" font-weight="bold" text-anchor="start" fill="#1e1e1e" stroke="#1e1e1e" stroke-width="0.2" >CLGOCV</text>
<rect x="498.7" y="234.6" width="34.50000000000006" height="5.599999999999994" fill="rgba(255,255,255,0.0)" stroke="#777" stroke-width="0.8" />
<text x="500.5" y="238.7" font-size="5.5" font-weight="bold" text-anchor="start" fill="#1e1e1e" stroke="#1e1e1e" stroke-width="0.2" >PHOTO 105</text>
<text x="447" y="246.5" font-size="5.75" text-anchor="end" fill="#262626" stroke="#262626" stroke-width="0.15" >0.85P</text>
<text x="490" y="246.3" font-size="5.75" text-anchor="end" fill="#262626" stroke="#262626" stroke-width="0.15" >0.85P</text>
<text x="400.5" y="259.4" font-size="5.75" text-anchor="end" fill="#262626" stroke="#262626" stroke-width="0.15" >2</text>
<text x="405" y="259.4" font-size="5.5" font-weight="bold" text-anchor="start" fill="#1e1e1e" stroke="#1e1e1e" stroke-width="0.2" >CLG05-1</text>
<rect x="392" y="263" width="21.30000000000001" height="28" fill="#7ecbe0" stroke="#46707e" stroke-width="0.9" />
<line x1="402.5" y1="264" x2="402.5" y2="271.9" stroke="#2f6475" stroke-width="0.9" />
<line x1="402.5" y1="282.1" x2="402.5" y2="290" stroke="#2f6475" stroke-width="0.9" />
<polyline points="398.2,266.9 402.5,263.7 406.8,266.9" fill="none" stroke="#2f6475" stroke-width="0.9" />
<polyline points="398.2,287.1 402.5,290.3 406.8,287.1" fill="none" stroke="#2f6475" stroke-width="0.9" />
<rect x="399.9" y="271.9" width="6.600000000000023" height="10.200000000000045" fill="none" stroke="#2f6475" stroke-width="0.9" />
<line x1="399.9" y1="279.8" x2="406.5" y2="274.2" stroke="#2f6475" stroke-width="0.9" />
<line x1="397.1" y1="277.0" x2="399.9" y2="277.0" stroke="#2f6475" stroke-width="0.9" />
<path d="M395.3,274.0 L397.3,274.0 L396.6,277.0 L397.3,280.0 L395.3,280.0 L396.0,277.0 Z" fill="#111"/>
<path d="M399.5,263.2 Q402.5,258.8 405.5,263.2" fill="#fff" stroke="#555" stroke-width="0.7"/>
<path d="M399.5,290.8 Q402.5,295.2 405.5,290.8" fill="#fff" stroke="#555" stroke-width="0.7"/>
<polygon points="402.5,262.54 403.76,263.8 402.5,265.06 401.24,263.8" fill="#111"/>
<polygon points="402.5,288.94 403.76,290.2 402.5,291.46 401.24,290.2" fill="#111"/>
<text x="415.2" y="267.7" font-size="5.5" font-weight="bold" text-anchor="start" fill="#1e1e1e" stroke="#1e1e1e" stroke-width="0.2" >OIL</text>
<text x="415.2" y="273.3" font-size="5.5" font-weight="bold" text-anchor="start" fill="#1e1e1e" stroke="#1e1e1e" stroke-width="0.2" >CONTROL</text>
<text x="415.2" y="278.9" font-size="5.5" font-weight="bold" text-anchor="start" fill="#1e1e1e" stroke="#1e1e1e" stroke-width="0.2" >VALVE #1□</text>
<text x="415.2" y="284.5" font-size="5.5" font-weight="bold" text-anchor="start" fill="#1e1e1e" stroke="#1e1e1e" stroke-width="0.2" >(BANK1)</text>
<text x="415.2" y="290.1" font-size="5.5" font-weight="bold" text-anchor="start" fill="#1e1e1e" stroke="#1e1e1e" stroke-width="0.2" >(EXHAUST)</text>
<text x="400.5" y="299.6" font-size="5.75" text-anchor="end" fill="#262626" stroke="#262626" stroke-width="0.15" >1</text>
<text x="405" y="299.6" font-size="5.5" font-weight="bold" text-anchor="start" fill="#1e1e1e" stroke="#1e1e1e" stroke-width="0.2" >CLG05-1</text>
<rect x="406.2" y="301.6" width="22.100000000000023" height="12.399999999999977" fill="rgba(255,255,255,0.0)" stroke="#777" stroke-width="0.8" />
<text x="408.0" y="307.2" font-size="5.5" font-weight="bold" text-anchor="start" fill="#1e1e1e" stroke="#1e1e1e" stroke-width="0.2" >PHOTO</text>
<text x="408.0" y="312.9" font-size="5.5" font-weight="bold" text-anchor="start" fill="#1e1e1e" stroke="#1e1e1e" stroke-width="0.2" >137</text>
<text x="490.2" y="259.5" font-size="5.75" text-anchor="end" fill="#262626" stroke="#262626" stroke-width="0.15" >1</text>
<text x="495.8" y="259.5" font-size="5.5" font-weight="bold" text-anchor="start" fill="#1e1e1e" stroke="#1e1e1e" stroke-width="0.2" >CLG05-4</text>
<rect x="482.1" y="263" width="21.5" height="28" fill="#7ecbe0" stroke="#46707e" stroke-width="0.9" />
<line x1="493" y1="264" x2="493" y2="271.9" stroke="#2f6475" stroke-width="0.9" />
<line x1="493" y1="282.1" x2="493" y2="290" stroke="#2f6475" stroke-width="0.9" />
<polyline points="488.7,266.9 493,263.7 497.3,266.9" fill="none" stroke="#2f6475" stroke-width="0.9" />
<polyline points="488.7,287.1 493,290.3 497.3,287.1" fill="none" stroke="#2f6475" stroke-width="0.9" />
<rect x="490.4" y="271.9" width="6.600000000000023" height="10.200000000000045" fill="none" stroke="#2f6475" stroke-width="0.9" />
<line x1="490.4" y1="279.8" x2="497.0" y2="274.2" stroke="#2f6475" stroke-width="0.9" />
<line x1="487.6" y1="277.0" x2="490.4" y2="277.0" stroke="#2f6475" stroke-width="0.9" />
<path d="M485.8,274.0 L487.8,274.0 L487.1,277.0 L487.8,280.0 L485.8,280.0 L486.5,277.0 Z" fill="#111"/>
<path d="M490,263.2 Q493,258.8 496,263.2" fill="#fff" stroke="#555" stroke-width="0.7"/>
<path d="M490,290.8 Q493,295.2 496,290.8" fill="#fff" stroke="#555" stroke-width="0.7"/>
<polygon points="493,262.54 494.26,263.8 493,265.06 491.74,263.8" fill="#111"/>
<polygon points="493,288.94 494.26,290.2 493,291.46 491.74,290.2" fill="#111"/>
<text x="505.3" y="267.7" font-size="5.5" font-weight="bold" text-anchor="start" fill="#1e1e1e" stroke="#1e1e1e" stroke-width="0.2" >OIL</text>
<text x="505.3" y="273.3" font-size="5.5" font-weight="bold" text-anchor="start" fill="#1e1e1e" stroke="#1e1e1e" stroke-width="0.2" >CONTROL</text>
<text x="505.3" y="278.9" font-size="5.5" font-weight="bold" text-anchor="start" fill="#1e1e1e" stroke="#1e1e1e" stroke-width="0.2" >VALVE #4□</text>
<text x="505.3" y="284.5" font-size="5.5" font-weight="bold" text-anchor="start" fill="#1e1e1e" stroke="#1e1e1e" stroke-width="0.2" >(BANK2)</text>
<text x="505.3" y="290.1" font-size="5.5" font-weight="bold" text-anchor="start" fill="#1e1e1e" stroke="#1e1e1e" stroke-width="0.2" >(INTAKE)</text>
<text x="490.2" y="298.8" font-size="5.75" text-anchor="end" fill="#262626" stroke="#262626" stroke-width="0.15" >2</text>
<text x="495.8" y="298.8" font-size="5.5" font-weight="bold" text-anchor="start" fill="#1e1e1e" stroke="#1e1e1e" stroke-width="0.2" >CLG05-4</text>
<rect x="495.8" y="301.6" width="21.69999999999999" height="12.0" fill="rgba(255,255,255,0.0)" stroke="#777" stroke-width="0.8" />
<text x="497.6" y="307.2" font-size="5.5" font-weight="bold" text-anchor="start" fill="#1e1e1e" stroke="#1e1e1e" stroke-width="0.2" >PHOTO</text>
<text x="497.6" y="312.9" font-size="5.5" font-weight="bold" text-anchor="start" fill="#1e1e1e" stroke="#1e1e1e" stroke-width="0.2" >31</text>
<text x="581.3" y="259.5" font-size="5.75" text-anchor="end" fill="#262626" stroke="#262626" stroke-width="0.15" >1</text>
<text x="585.9" y="259.5" font-size="5.5" font-weight="bold" text-anchor="start" fill="#1e1e1e" stroke="#1e1e1e" stroke-width="0.2" >F12</text>
<rect x="572.3" y="263" width="21.40000000000009" height="28" fill="#7ecbe0" stroke="#46707e" stroke-width="0.9" />
<line x1="583.5" y1="264" x2="583.5" y2="271.9" stroke="#2f6475" stroke-width="0.9" />
<line x1="583.5" y1="282.1" x2="583.5" y2="290" stroke="#2f6475" stroke-width="0.9" />
<polyline points="579.2,266.9 583.5,263.7 587.8,266.9" fill="none" stroke="#2f6475" stroke-width="0.9" />
<polyline points="579.2,287.1 583.5,290.3 587.8,287.1" fill="none" stroke="#2f6475" stroke-width="0.9" />
<rect x="580.9" y="271.9" width="6.600000000000023" height="10.200000000000045" fill="none" stroke="#2f6475" stroke-width="0.9" />
<line x1="580.9" y1="279.8" x2="587.5" y2="274.2" stroke="#2f6475" stroke-width="0.9" />
<line x1="578.1" y1="277.0" x2="580.9" y2="277.0" stroke="#2f6475" stroke-width="0.9" />
<path d="M576.3,274.0 L578.3,274.0 L577.6,277.0 L578.3,280.0 L576.3,280.0 L577.0,277.0 Z" fill="#111"/>
<path d="M580.5,263.2 Q583.5,258.8 586.5,263.2" fill="#fff" stroke="#555" stroke-width="0.7"/>
<path d="M580.5,290.8 Q583.5,295.2 586.5,290.8" fill="#fff" stroke="#555" stroke-width="0.7"/>
<polygon points="583.5,262.54 584.76,263.8 583.5,265.06 582.24,263.8" fill="#111"/>
<polygon points="583.5,288.94 584.76,290.2 583.5,291.46 582.24,290.2" fill="#111"/>
<text x="595.4" y="267.7" font-size="5.5" font-weight="bold" text-anchor="start" fill="#1e1e1e" stroke="#1e1e1e" stroke-width="0.2" >CANISTER</text>
<text x="595.4" y="273.3" font-size="5.5" font-weight="bold" text-anchor="start" fill="#1e1e1e" stroke="#1e1e1e" stroke-width="0.2" >CLOSE</text>
<text x="595.4" y="278.9" font-size="5.5" font-weight="bold" text-anchor="start" fill="#1e1e1e" stroke="#1e1e1e" stroke-width="0.2" >VALVE</text>
<rect x="595.7" y="280.9" width="23.0" height="12.200000000000045" fill="rgba(255,255,255,0.0)" stroke="#777" stroke-width="0.8" />
<text x="597.5" y="286.3" font-size="5.5" font-weight="bold" text-anchor="start" fill="#1e1e1e" stroke="#1e1e1e" stroke-width="0.2" >PHOTO</text>
<text x="597.5" y="292.0" font-size="5.5" font-weight="bold" text-anchor="start" fill="#1e1e1e" stroke="#1e1e1e" stroke-width="0.2" >31</text>
<text x="581.3" y="298.8" font-size="5.75" text-anchor="end" fill="#262626" stroke="#262626" stroke-width="0.15" >2</text>
<text x="585.9" y="298.8" font-size="5.5" font-weight="bold" text-anchor="start" fill="#1e1e1e" stroke="#1e1e1e" stroke-width="0.2" >F12</text>
<text x="447" y="311.9" font-size="5.75" text-anchor="end" fill="#262626" stroke="#262626" stroke-width="0.15" >1</text>
<text x="451.8" y="311.9" font-size="5.5" font-weight="bold" text-anchor="start" fill="#1e1e1e" stroke="#1e1e1e" stroke-width="0.2" >CLG05-3</text>
<rect x="438.5" y="315.7" width="20.80000000000001" height="28.69999999999999" fill="#7ecbe0" stroke="#46707e" stroke-width="0.9" />
<line x1="449.1" y1="316.7" x2="449.1" y2="324.94999999999993" stroke="#2f6475" stroke-width="0.9" />
<line x1="449.1" y1="335.15" x2="449.1" y2="343.4" stroke="#2f6475" stroke-width="0.9" />
<polyline points="444.8,319.59999999999997 449.1,316.4 453.40000000000003,319.59999999999997" fill="none" stroke="#2f6475" stroke-width="0.9" />
<polyline points="444.8,340.5 449.1,343.7 453.40000000000003,340.5" fill="none" stroke="#2f6475" stroke-width="0.9" />
<rect x="446.5" y="324.94999999999993" width="6.600000000000023" height="10.200000000000045" fill="none" stroke="#2f6475" stroke-width="0.9" />
<line x1="446.5" y1="332.84999999999997" x2="453.1" y2="327.24999999999994" stroke="#2f6475" stroke-width="0.9" />
<line x1="443.70000000000005" y1="330.04999999999995" x2="446.5" y2="330.04999999999995" stroke="#2f6475" stroke-width="0.9" />
<path d="M441.90000000000003,327.04999999999995 L443.90000000000003,327.04999999999995 L443.20000000000005,330.04999999999995 L443.90000000000003,333.04999999999995 L441.90000000000003,333.04999999999995 L442.6,330.04999999999995 Z" fill="#111"/>
<path d="M446.1,315.9 Q449.1,311.5 452.1,315.9" fill="#fff" stroke="#555" stroke-width="0.7"/>
<path d="M446.1,344.2 Q449.1,348.59999999999997 452.1,344.2" fill="#fff" stroke="#555" stroke-width="0.7"/>
<polygon points="449.1,315.24 450.36,316.5 449.1,317.76 447.84000000000003,316.5" fill="#111"/>
<polygon points="449.1,342.34 450.36,343.59999999999997 449.1,344.85999999999996 447.84000000000003,343.59999999999997" fill="#111"/>
<text x="461.1" y="320.4" font-size="5.5" font-weight="bold" text-anchor="start" fill="#1e1e1e" stroke="#1e1e1e" stroke-width="0.2" >OIL</text>
<text x="461.1" y="326" font-size="5.5" font-weight="bold" text-anchor="start" fill="#1e1e1e" stroke="#1e1e1e" stroke-width="0.2" >CONTROL</text>
<text x="461.1" y="331.6" font-size="5.5" font-weight="bold" text-anchor="start" fill="#1e1e1e" stroke="#1e1e1e" stroke-width="0.2" >VALVE #3□</text>
<text x="461.1" y="337.2" font-size="5.5" font-weight="bold" text-anchor="start" fill="#1e1e1e" stroke="#1e1e1e" stroke-width="0.2" >(BANK1)</text>
<text x="461.1" y="342.8" font-size="5.5" font-weight="bold" text-anchor="start" fill="#1e1e1e" stroke="#1e1e1e" stroke-width="0.2" >(INTAKE)</text>
<text x="447" y="351" font-size="5.75" text-anchor="end" fill="#262626" stroke="#262626" stroke-width="0.15" >2</text>
<text x="451.8" y="351" font-size="5.5" font-weight="bold" text-anchor="start" fill="#1e1e1e" stroke="#1e1e1e" stroke-width="0.2" >CLG05-3</text>
<rect x="451.8" y="354.1" width="22.80000000000001" height="12.599999999999966" fill="rgba(255,255,255,0.0)" stroke="#777" stroke-width="0.8" />
<text x="453.6" y="359.7" font-size="5.5" font-weight="bold" text-anchor="start" fill="#1e1e1e" stroke="#1e1e1e" stroke-width="0.2" >PHOTO</text>
<text x="453.6" y="365.5" font-size="5.5" font-weight="bold" text-anchor="start" fill="#1e1e1e" stroke="#1e1e1e" stroke-width="0.2" >31</text>
<text x="534.3" y="311.7" font-size="5.75" text-anchor="end" fill="#262626" stroke="#262626" stroke-width="0.15" >2</text>
<text x="538.4" y="311.7" font-size="5.5" font-weight="bold" text-anchor="start" fill="#1e1e1e" stroke="#1e1e1e" stroke-width="0.2" >CLG05-2</text>
<rect x="525.4" y="315.7" width="21.5" height="28.900000000000034" fill="#7ecbe0" stroke="#46707e" stroke-width="0.9" />
<line x1="536.4" y1="316.7" x2="536.4" y2="325.04999999999995" stroke="#2f6475" stroke-width="0.9" />
<line x1="536.4" y1="335.25" x2="536.4" y2="343.6" stroke="#2f6475" stroke-width="0.9" />
<polyline points="532.1,319.59999999999997 536.4,316.4 540.6999999999999,319.59999999999997" fill="none" stroke="#2f6475" stroke-width="0.9" />
<polyline points="532.1,340.70000000000005 536.4,343.90000000000003 540.6999999999999,340.70000000000005" fill="none" stroke="#2f6475" stroke-width="0.9" />
<rect x="533.8" y="325.04999999999995" width="6.600000000000023" height="10.200000000000045" fill="none" stroke="#2f6475" stroke-width="0.9" />
<line x1="533.8" y1="332.95" x2="540.4" y2="327.34999999999997" stroke="#2f6475" stroke-width="0.9" />
<line x1="531.0" y1="330.15" x2="533.8" y2="330.15" stroke="#2f6475" stroke-width="0.9" />
<path d="M529.1999999999999,327.15 L531.1999999999999,327.15 L530.5,330.15 L531.1999999999999,333.15 L529.1999999999999,333.15 L529.9,330.15 Z" fill="#111"/>
<path d="M533.4,315.9 Q536.4,311.5 539.4,315.9" fill="#fff" stroke="#555" stroke-width="0.7"/>
<path d="M533.4,344.40000000000003 Q536.4,348.8 539.4,344.40000000000003" fill="#fff" stroke="#555" stroke-width="0.7"/>
<polygon points="536.4,315.24 537.66,316.5 536.4,317.76 535.14,316.5" fill="#111"/>
<polygon points="536.4,342.54 537.66,343.8 536.4,345.06 535.14,343.8" fill="#111"/>
<text x="549.3" y="320.4" font-size="5.5" font-weight="bold" text-anchor="start" fill="#1e1e1e" stroke="#1e1e1e" stroke-width="0.2" >OIL</text>
<text x="549.3" y="326" font-size="5.5" font-weight="bold" text-anchor="start" fill="#1e1e1e" stroke="#1e1e1e" stroke-width="0.2" >CONTROL</text>
<text x="549.3" y="331.6" font-size="5.5" font-weight="bold" text-anchor="start" fill="#1e1e1e" stroke="#1e1e1e" stroke-width="0.2" >VALVE #2</text>
<text x="549.3" y="337.2" font-size="5.5" font-weight="bold" text-anchor="start" fill="#1e1e1e" stroke="#1e1e1e" stroke-width="0.2" >(BANK2)</text>
<text x="549.3" y="342.8" font-size="5.5" font-weight="bold" text-anchor="start" fill="#1e1e1e" stroke="#1e1e1e" stroke-width="0.2" >(EXHAUST)</text>
<text x="534.3" y="352" font-size="5.75" text-anchor="end" fill="#262626" stroke="#262626" stroke-width="0.15" >1</text>
<text x="538.4" y="352" font-size="5.5" font-weight="bold" text-anchor="start" fill="#1e1e1e" stroke="#1e1e1e" stroke-width="0.2" >CLG05-2</text>
<rect x="539.6" y="354.8" width="22.100000000000023" height="12.0" fill="rgba(255,255,255,0.0)" stroke="#777" stroke-width="0.8" />
<text x="541.4" y="360.3" font-size="5.5" font-weight="bold" text-anchor="start" fill="#1e1e1e" stroke="#1e1e1e" stroke-width="0.2" >PHOTO</text>
<text x="541.4" y="366.0" font-size="5.5" font-weight="bold" text-anchor="start" fill="#1e1e1e" stroke="#1e1e1e" stroke-width="0.2" >105</text>
<text x="581.3" y="180" font-size="5.75" text-anchor="end" fill="#262626" stroke="#262626" stroke-width="0.15" >0.5O</text>
<line x1="583.5" y1="198.1" x2="583.5" y2="199.9" stroke="#ffffff" stroke-width="1.5" />
<polyline points="580.1,194.6 583.5,197.4 586.9,194.6" fill="none" stroke="#2a2a2a" stroke-width="1.0" />
<polyline points="580.1,197.79999999999998 583.5,200.6 586.9,197.79999999999998" fill="none" stroke="#5a5a5a" stroke-width="1.0" />
<text x="578.8" y="199.8" font-size="5.75" text-anchor="end" fill="#262626" stroke="#262626" stroke-width="0.15" >3</text>
<text x="588.1" y="199.9" font-size="5.5" font-weight="bold" text-anchor="start" fill="#1e1e1e" stroke="#1e1e1e" stroke-width="0.2" >EC21</text>
<rect x="589.3" y="202.8" width="34.0" height="5.699999999999989" fill="rgba(255,255,255,0.0)" stroke="#777" stroke-width="0.8" />
<text x="591.0999999999999" y="207.0" font-size="5.5" font-weight="bold" text-anchor="start" fill="#1e1e1e" stroke="#1e1e1e" stroke-width="0.2" >PHOTO 105</text>
<text x="581.3" y="217.8" font-size="5.75" text-anchor="end" fill="#262626" stroke="#262626" stroke-width="0.15" >0.5O</text>
<line x1="583.5" y1="227.29999999999998" x2="583.5" y2="229.1" stroke="#ffffff" stroke-width="1.5" />
<polyline points="580.1,229.4 583.5,226.6 586.9,229.4" fill="none" stroke="#5a5a5a" stroke-width="1.0" />
<polyline points="580.1,232.6 583.5,229.79999999999998 586.9,232.6" fill="none" stroke="#2a2a2a" stroke-width="1.0" />
<text x="579.5" y="231.6" font-size="5.75" text-anchor="end" fill="#262626" stroke="#262626" stroke-width="0.15" >15</text>
<text x="588.1" y="231.8" font-size="5.5" font-weight="bold" text-anchor="start" fill="#1e1e1e" stroke="#1e1e1e" stroke-width="0.2" >EF11</text>
<rect x="589.3" y="233.9" width="34.0" height="6.099999999999994" fill="rgba(255,255,255,0.0)" stroke="#777" stroke-width="0.8" />
<text x="591.0999999999999" y="238.5" font-size="5.5" font-weight="bold" text-anchor="start" fill="#1e1e1e" stroke="#1e1e1e" stroke-width="0.2" >PHOTO 105</text>
<text x="581.3" y="246.5" font-size="5.75" text-anchor="end" fill="#262626" stroke="#262626" stroke-width="0.15" >0.5O</text>
<text x="581.3" y="378.4" font-size="5.75" text-anchor="end" fill="#262626" stroke="#262626" stroke-width="0.15" >0.5Gr</text>
<line x1="583.5" y1="391.3" x2="583.5" y2="393.1" stroke="#ffffff" stroke-width="1.5" />
<polyline points="580.1,387.8 583.5,390.6 586.9,387.8" fill="none" stroke="#2a2a2a" stroke-width="1.0" />
<polyline points="580.1,391.0 583.5,393.8 586.9,391.0" fill="none" stroke="#5a5a5a" stroke-width="1.0" />
<text x="579.5" y="391.8" font-size="5.75" text-anchor="end" fill="#262626" stroke="#262626" stroke-width="0.15" >14</text>
<text x="588.5" y="391.8" font-size="5.5" font-weight="bold" text-anchor="start" fill="#1e1e1e" stroke="#1e1e1e" stroke-width="0.2" >EF11</text>
<rect x="589.5" y="394" width="33.5" height="5.899999999999977" fill="rgba(255,255,255,0.0)" stroke="#777" stroke-width="0.8" />
<text x="591.3" y="398.4" font-size="5.5" font-weight="bold" text-anchor="start" fill="#1e1e1e" stroke="#1e1e1e" stroke-width="0.2" >PHOTO 105</text>
<text x="581.3" y="406.7" font-size="5.75" text-anchor="end" fill="#262626" stroke="#262626" stroke-width="0.15" >0.3Gr</text>
<text x="581.3" y="419.2" font-size="5.75" text-anchor="end" fill="#262626" stroke="#262626" stroke-width="0.15" >96</text>
<text x="585.5" y="419.2" font-size="5.5" font-weight="bold" text-anchor="start" fill="#1e1e1e" stroke="#1e1e1e" stroke-width="0.2" >ELG-A</text>
<text x="446.8" y="378.1" font-size="5.75" text-anchor="end" fill="#262626" stroke="#262626" stroke-width="0.15" >0.85W</text>
<text x="490.6" y="378.1" font-size="5.75" text-anchor="end" fill="#262626" stroke="#262626" stroke-width="0.15" >0.85W</text>
<line x1="449.1" y1="387.3" x2="493" y2="387.3" stroke="#aaa" stroke-width="1.0" stroke-dasharray="2.4 1.8"/>
<line x1="449.1" y1="392.0" x2="449.1" y2="393.8" stroke="#ffffff" stroke-width="1.5" />
<polyline points="445.70000000000005,388.5 449.1,391.3 452.5,388.5" fill="none" stroke="#2a2a2a" stroke-width="1.0" />
<polyline points="445.70000000000005,391.7 449.1,394.5 452.5,391.7" fill="none" stroke="#5a5a5a" stroke-width="1.0" />
<line x1="493" y1="392.0" x2="493" y2="393.8" stroke="#ffffff" stroke-width="1.5" />
<polyline points="489.6,388.5 493,391.3 496.4,388.5" fill="none" stroke="#2a2a2a" stroke-width="1.0" />
<polyline points="489.6,391.7 493,394.5 496.4,391.7" fill="none" stroke="#5a5a5a" stroke-width="1.0" />
<text x="446.3" y="392" font-size="5.75" text-anchor="end" fill="#262626" stroke="#262626" stroke-width="0.15" >1</text>
<text x="490.2" y="392" font-size="5.75" text-anchor="end" fill="#262626" stroke="#262626" stroke-width="0.15" >3</text>
<text x="498.6" y="391.8" font-size="5.5" font-weight="bold" text-anchor="start" fill="#1e1e1e" stroke="#1e1e1e" stroke-width="0.2" >CLGOCV</text>
<rect x="498.6" y="394.1" width="35.0" height="5.699999999999989" fill="rgba(255,255,255,0.0)" stroke="#777" stroke-width="0.8" />
<text x="500.40000000000003" y="398.3" font-size="5.5" font-weight="bold" text-anchor="start" fill="#1e1e1e" stroke="#1e1e1e" stroke-width="0.2" >PHOTO 105</text>
<text x="401" y="407.1" font-size="5.75" text-anchor="end" fill="#262626" stroke="#262626" stroke-width="0.15" >0.5L</text>
<text x="446.8" y="407.1" font-size="5.75" text-anchor="end" fill="#262626" stroke="#262626" stroke-width="0.15" >0.5L</text>
<text x="490.6" y="407.1" font-size="5.75" text-anchor="end" fill="#262626" stroke="#262626" stroke-width="0.15" >0.5Gr</text>
<text x="534.3" y="406.8" font-size="5.75" text-anchor="end" fill="#262626" stroke="#262626" stroke-width="0.15" >0.5G</text>
<text x="401" y="419.6" font-size="5.75" text-anchor="end" fill="#262626" stroke="#262626" stroke-width="0.15" >94</text>
<text x="446.8" y="419.6" font-size="5.75" text-anchor="end" fill="#262626" stroke="#262626" stroke-width="0.15" >96</text>
<text x="490.6" y="419.6" font-size="5.75" text-anchor="end" fill="#262626" stroke="#262626" stroke-width="0.15" >95</text>
<text x="534.3" y="419.2" font-size="5.75" text-anchor="end" fill="#262626" stroke="#262626" stroke-width="0.15" >93</text>
<text x="538" y="419.2" font-size="5.5" font-weight="bold" text-anchor="start" fill="#1e1e1e" stroke="#1e1e1e" stroke-width="0.2" >CLG-B</text>
<line x1="63.8" y1="421.3" x2="536.4" y2="421.3" stroke="#999" stroke-width="1.0" stroke-dasharray="2.4 1.8"/>
<rect x="51" y="424.7" width="547.4" height="27.30000000000001" fill="#7ecbe0" stroke="#4a6f7c" stroke-width="1.2" />
<path d="M60.599999999999994,425.2 L63.8,422.09999999999997 L67.0,425.2" fill="#fff" stroke="#444" stroke-width="0.8"/>
<path d="M84.2,425.2 L87.4,422.09999999999997 L90.60000000000001,425.2" fill="#fff" stroke="#444" stroke-width="0.8"/>
<path d="M129.4,425.2 L132.6,422.09999999999997 L135.79999999999998,425.2" fill="#fff" stroke="#444" stroke-width="0.8"/>
<path d="M175.3,425.2 L178.5,422.09999999999997 L181.7,425.2" fill="#fff" stroke="#444" stroke-width="0.8"/>
<path d="M254.2,425.2 L257.4,422.09999999999997 L260.59999999999997,425.2" fill="#fff" stroke="#444" stroke-width="0.8"/>
<path d="M399.3,425.2 L402.5,422.09999999999997 L405.7,425.2" fill="#fff" stroke="#444" stroke-width="0.8"/>
<path d="M445.90000000000003,425.2 L449.1,422.09999999999997 L452.3,425.2" fill="#fff" stroke="#444" stroke-width="0.8"/>
<path d="M489.8,425.2 L493,422.09999999999997 L496.2,425.2" fill="#fff" stroke="#444" stroke-width="0.8"/>
<path d="M533.1999999999999,425.2 L536.4,422.09999999999997 L539.6,425.2" fill="#fff" stroke="#444" stroke-width="0.8"/>
<path d="M580.3,425.2 L583.5,422.09999999999997 L586.7,425.2" fill="#fff" stroke="#444" stroke-width="0.8"/>
<path d="M57,428 q1,2.3 4,2.3 l10.5,0 q3,0 3.5,2.0 q0.5,-2.0 3.5,-2.0 l10.5,0 q3,0 4,-2.3" fill="none" stroke="#22384f" stroke-width="0.8"/>
<text x="57.8" y="439.4" font-size="5.77" text-anchor="start" fill="#22384f" stroke="#22384f" stroke-width="0.15" >Battery Power</text>
<text x="122.6" y="431.9" font-size="5.77" text-anchor="start" fill="#22384f" stroke="#22384f" stroke-width="0.15" >Engine</text>
<text x="122.6" y="437.6" font-size="5.77" text-anchor="start" fill="#22384f" stroke="#22384f" stroke-width="0.15" >Control</text>
<text x="122.6" y="443.3" font-size="5.77" text-anchor="start" fill="#22384f" stroke="#22384f" stroke-width="0.15" >Relay</text>
<text x="122.6" y="449.0" font-size="5.77" text-anchor="start" fill="#22384f" stroke="#22384f" stroke-width="0.15" >Control</text>
<text x="166.3" y="431.9" font-size="5.77" text-anchor="start" fill="#22384f" stroke="#22384f" stroke-width="0.15" >Engine</text>
<text x="166.3" y="437.6" font-size="5.77" text-anchor="start" fill="#22384f" stroke="#22384f" stroke-width="0.15" >Control</text>
<text x="166.3" y="443.3" font-size="5.77" text-anchor="start" fill="#22384f" stroke="#22384f" stroke-width="0.15" >Relay 'ON'</text>
<text x="166.3" y="449.0" font-size="5.77" text-anchor="start" fill="#22384f" stroke="#22384f" stroke-width="0.15" >Input</text>
<text x="248.2" y="431.9" font-size="5.77" text-anchor="start" fill="#22384f" stroke="#22384f" stroke-width="0.15" >PCSVD</text>
<text x="248.2" y="437.6" font-size="5.77" text-anchor="start" fill="#22384f" stroke="#22384f" stroke-width="0.15" >Control</text>
<text x="390.2" y="431.9" font-size="5.77" text-anchor="start" fill="#22384f" stroke="#22384f" stroke-width="0.15" >Bank1</text>
<text x="390.2" y="437.6" font-size="5.77" text-anchor="start" fill="#22384f" stroke="#22384f" stroke-width="0.15" >CVVT</text>
<text x="390.2" y="443.3" font-size="5.77" text-anchor="start" fill="#22384f" stroke="#22384f" stroke-width="0.15" >(Exhaust)</text>
<text x="440.8" y="431.5" font-size="5.77" text-anchor="start" fill="#22384f" stroke="#22384f" stroke-width="0.15" >Bank1</text>
<text x="484.6" y="431.5" font-size="5.77" text-anchor="start" fill="#22384f" stroke="#22384f" stroke-width="0.15" >Bank2</text>
<path d="M436.2,432.8 q1,2.3 4,2.3 l27,0 q3,0 3.5,2.0 q0.5,-2.0 3.5,-2.0 l27,0 q3,0 4,-2.3" fill="none" stroke="#22384f" stroke-width="0.8"/>
<text x="471.5" y="444.8" font-size="5.77" text-anchor="middle" fill="#22384f" stroke="#22384f" stroke-width="0.15" >CVVT (Intake)</text>
<text x="524.1" y="431.9" font-size="5.77" text-anchor="start" fill="#22384f" stroke="#22384f" stroke-width="0.15" >Bank2</text>
<text x="524.1" y="437.6" font-size="5.77" text-anchor="start" fill="#22384f" stroke="#22384f" stroke-width="0.15" >CVVT</text>
<text x="524.1" y="443.3" font-size="5.77" text-anchor="start" fill="#22384f" stroke="#22384f" stroke-width="0.15" >(Exhaust)</text>
<text x="574.5" y="431.9" font-size="5.77" text-anchor="start" fill="#22384f" stroke="#22384f" stroke-width="0.15" >CCV</text>
<text x="574.5" y="437.6" font-size="5.77" text-anchor="start" fill="#22384f" stroke="#22384f" stroke-width="0.15" >Control</text>
<text x="600.2" y="428.5" font-size="5.5" font-weight="bold" text-anchor="start" fill="#1e1e1e" stroke="#1e1e1e" stroke-width="0.2" >ECM</text>
<rect x="600.7" y="430.7" width="22.899999999999977" height="13.0" fill="rgba(255,255,255,0.0)" stroke="#777" stroke-width="0.8" />
<text x="602.5" y="437.0" font-size="5.5" font-weight="bold" text-anchor="start" fill="#1e1e1e" stroke="#1e1e1e" stroke-width="0.2" >PHOTO</text>
<text x="602.5" y="442.6" font-size="5.5" font-weight="bold" text-anchor="start" fill="#1e1e1e" stroke="#1e1e1e" stroke-width="0.2" >36</text>
<path d="M328.6,98.3 C331,98.1 334,98 336.3,98 C337.5,98.2 338.5,98.7 339.1,99.3 C341,101 342.5,102.3 343.6,103.4 C345,105 346,105.8 346.8,106.6 C347.8,107.8 348.8,109 349.4,110.1" fill="none" stroke="#1616f0" stroke-width="1.75" stroke-linecap="round" stroke-linejoin="round"/>
<path d="M309.8,131.9 C314,132 320,133 324.2,135 C318,137.5 306,139.5 297,140.4 C290,141 283,141.8 278.1,142.2 C281,148 285.5,158 288,166.6 C290,175 290.5,184 290.8,190.1 C291.5,194 297,197 304.4,198.2 C312,200 322,202.5 329.7,203.1 C336,203.5 343,202 346,199.1 C348.5,195 348.5,186 346.9,179.2 C346,172 345.5,169 344.1,166.6 C342.5,161 341,158 338.7,155.7 C336,150 333.5,146 331.5,143.1 C329,140 326.5,137 324.2,135" fill="none" stroke="#1616f0" stroke-width="1.75" stroke-linecap="round" stroke-linejoin="round"/>
<circle cx="318.5" cy="128" r="0.6" fill="#1616f0"/>
<path d="M207.2,221.6 C212,220.5 225,221 231.1,221.6 C232,230 234,255 235.6,281.3 C228,281.8 215,282.6 207.5,282.2 C202.5,281.5 200.6,278.5 200.3,272 C199.8,260 199.2,245 199.5,232 C200.5,227 203,223.5 207.2,221.6" fill="none" stroke="#1616f0" stroke-width="1.75" stroke-linecap="round" stroke-linejoin="round"/>
<path d="M272.5,229.6 C276,227.5 290,227 302.3,226.2 C312,225.5 320,225.8 325.4,229.2" fill="none" stroke="#1616f0" stroke-width="1.75" stroke-linecap="round" stroke-linejoin="round"/>
<path d="M317.5,221.7 C318.5,240 316.5,258 312.7,271.6 C311.5,275 310.5,277 309.7,278.3 C298,279 285,279 273.9,277.6 C271,276 270.5,265 271,259.7 C271,250 271,237 272.5,229.6" fill="none" stroke="#1616f0" stroke-width="1.75" stroke-linecap="round" stroke-linejoin="round"/>
<rect x="0" y="23.6" width="650" height="5" fill="url(#sh)"/>
<rect x="0" y="0" width="650" height="23.8" fill="#eaeaea"/>
<text x="17.3" y="15.8" font-size="11.0" font-weight="bold" fill="#2a3342">2015 Hyundai Genesis Coupe</text>
<text x="175.6" y="16" font-size="10.2" fill="#3c424c" stroke="#3c424c" stroke-width="0.15">V6-3.8L</text>
</svg>
</body></html>
